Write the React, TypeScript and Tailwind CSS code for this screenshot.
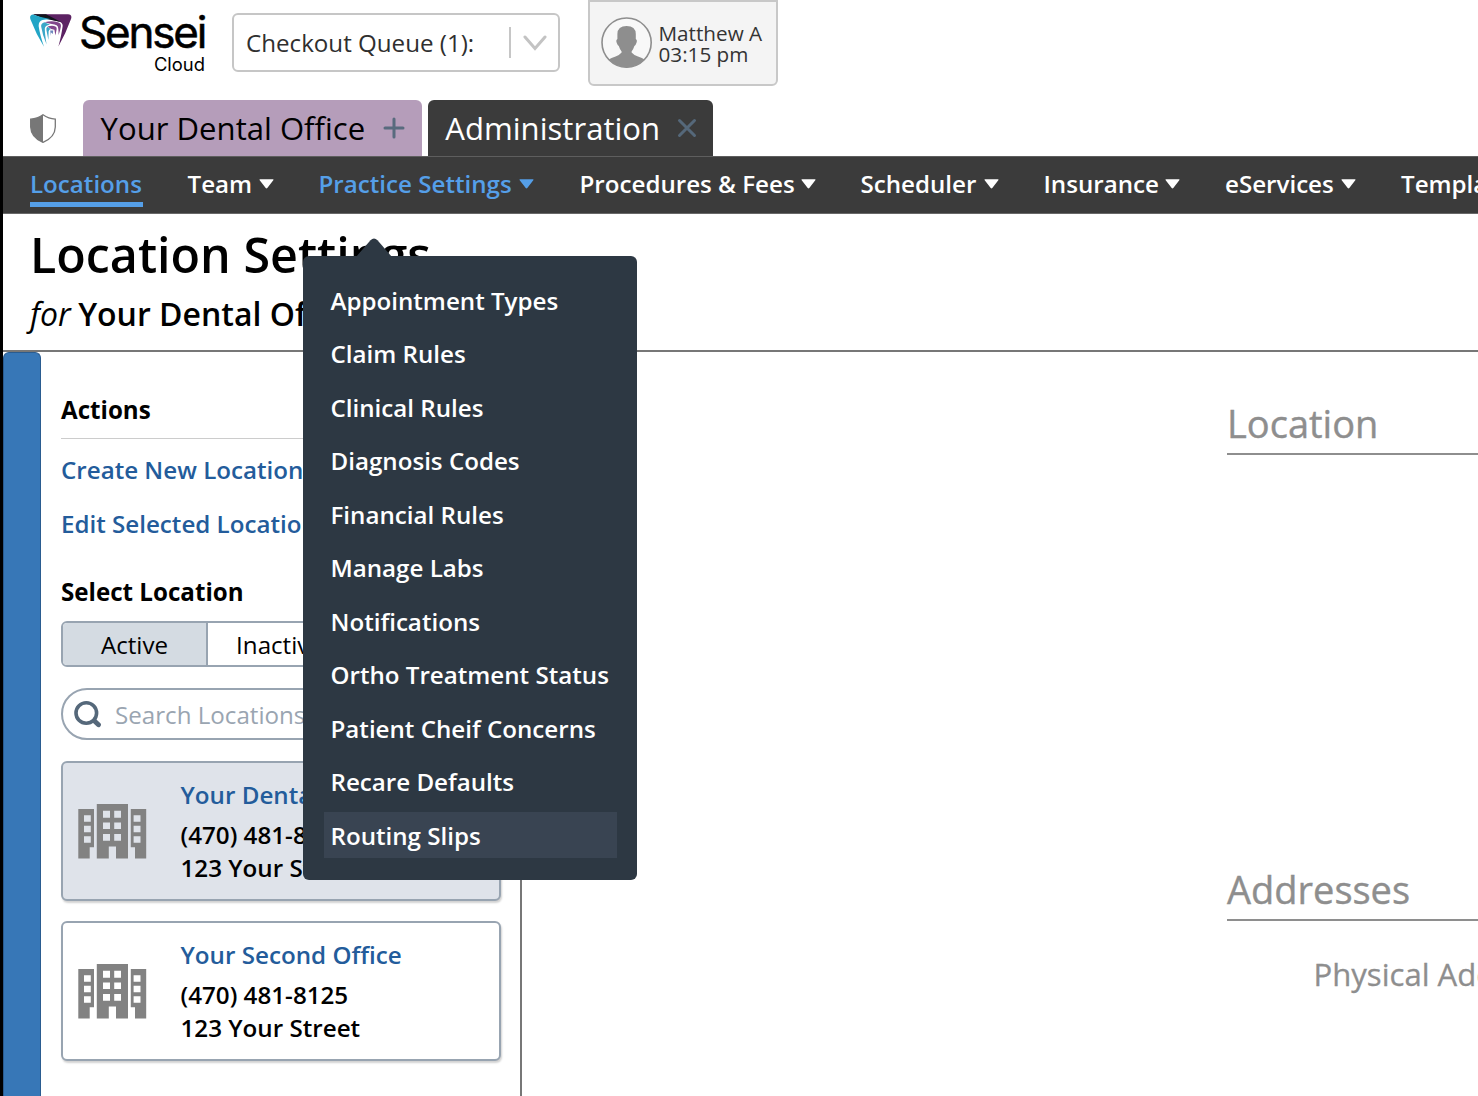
const navItems = [
  { label: "Team", width: "w-[131px]", caret: "ml-[7px]" },
  { label: "Practice Settings", width: "w-[261px]", caret: "ml-[7.5px]", active: true },
  { label: "Procedures & Fees", width: "w-[281px]", caret: "ml-[6.5px]" },
  { label: "Scheduler", width: "w-[183px]", caret: "ml-[7.5px]" },
  { label: "Insurance", width: "w-[181.5px]", caret: "ml-[6.5px]" },
  { label: "eServices", width: "w-[176px]", caret: "ml-[7.5px]" },
  { label: "Templates", width: "w-[190px]", caret: "ml-[7.5px]" },
];

const menuItems = [
  "Appointment Types",
  "Claim Rules",
  "Clinical Rules",
  "Diagnosis Codes",
  "Financial Rules",
  "Manage Labs",
  "Notifications",
  "Ortho Treatment Status",
  "Patient Cheif Concerns",
  "Recare Defaults",
  "Routing Slips",
];

function SenseiMark() {
  return (
    <svg className="h-[34px] w-[42px] shrink-0" viewBox="0 0 42 34">
      <path d="M3 0.3 H38 Q42.5 0.6 41 5 Q36 19 28.4 32.5 Q31.5 21 32.6 12.5 Q33.2 8.4 28.5 7.4 L16 4.5Z" fill="#5c2263" />
      <path d="M3 0.3 H16 L31 8 L12 4Z" fill="#12141c" />
      <path d="M3 0.5 Q-1 1 0.5 5.5 Q6 20 14 32.8 Q10 21 8.8 13 Q8 7.5 12.5 6 Q16 5 21 5.2 Q11 3.6 3 0.5Z" fill="#22a5c6" />
      <path d="M14.5 8.2 Q22 6.2 28 8.2 Q31.4 9.2 30.9 12.5 Q30.4 16 28.6 21 Q28.6 15 27.8 12.6 Q27 11 24.5 10.6 Q19 9.6 14.5 8.2Z" fill="#82468c" />
      <path d="M14.5 8.2 Q10.6 9.2 11.2 12.8 Q12.4 21 16.6 30.5 Q14.8 20 14.8 14.5 Q14.9 11.4 20 10.4 Q17 9.6 14.5 8.2Z" fill="#3aa7c8" />
      <path d="M17.5 12.6 Q22 11 25.4 12.4 Q27 13 26.7 15 L25.4 21.5 L24.4 15.8 Q20 15 17.5 12.6Z" fill="#82468c" />
      <path d="M17.5 12.8 Q16 13.6 16.4 16 L18.4 26 L18.6 17.4 Q18.8 15.4 21 15 Q19 14.2 17.5 12.8Z" fill="#3aa7c8" />
      <path d="M20.2 16.6 H23.2 L22.8 20 L21 18.6 L20.8 22Z" fill="#6a86bd" />
    </svg>
  );
}

function Buildings() {
  return (
    <svg className="h-[55px] w-[69px] shrink-0" viewBox="0 0 69 55" fill="#828282" fillRule="evenodd">
      <path d="M0.3 5H16V43.2H11.7V54.5H0.3Z M6 11.2V17.8H12.8V11.2Z M6 21.8V28.2H12.8V21.8Z M6 32.2V38.8H12.8V32.2Z" />
      <path d="M18.8 0H50V54.5H38V42.6H30.8V54.5H18.8Z M25 6.8V13.7H32V6.8Z M36.2 6.8V13.7H43V6.8Z M25 18.5V25H32V18.5Z M36.2 18.5V25H43V18.5Z M25 30V36.7H32V30Z M36.2 30V36.7H43V30Z" />
      <path d="M52.8 5H68.2V54.5H57V43.2H52.8Z M55.6 11.2V17.8H62.5V11.2Z M55.6 21.8V28.2H62.5V21.8Z M55.6 32.2V38.8H62.5V32.2Z" />
    </svg>
  );
}

function OfficeCard({ name, selected }: { name: string; selected?: boolean }) {
  return (
    <div
      className={
        "flex h-[140px] w-[440px] items-center rounded-[6px] border-2 border-[#98a4b1] pl-[15px] shadow-[1px_2px_2px_rgba(0,0,0,0.18)] " +
        (selected ? "bg-[#dfe3ea]" : "bg-white")
      }
    >
      <Buildings />
      <div className="ml-[33.5px] text-[24.2px] font-semibold leading-[33px] text-black">
        <div className="mb-[7px] whitespace-nowrap text-[#235c9b]">{name}</div>
        <div>(470) 481-8125</div>
        <div>123 Your Street</div>
      </div>
    </div>
  );
}

export default function App() {
  return (
    <div className="relative flex h-[1096px] w-[1478px] flex-col overflow-hidden border-l-[3px] border-black bg-white font-['Open_Sans',sans-serif] text-[24.15px] text-black">
      <header className="flex h-[100px] shrink-0 items-start">
        <div className="ml-[27px] mt-[14px] flex w-[175px]">
          <SenseiMark />
          <div className="ml-[7px] flex w-[126px] flex-col items-end font-['Inter',sans-serif]">
            <span className="h-[36px] self-start text-[44px] font-normal leading-[36px] tracking-[-2.2px] [-webkit-text-stroke:0.5px_black]">Sensei</span>
            <span className="mt-[4px] h-[20px] text-[18.4px] leading-[21px]">Cloud</span>
          </div>
        </div>
        <div className="ml-[27px] mt-[13px] flex h-[59px] w-[328px] items-center rounded-[6px] border-2 border-[#c6c6c6] pl-[12px] text-[#2f2f2f]">
          <span className="mt-[2px] whitespace-nowrap">Checkout Queue (1):</span>
          <span className="ml-auto h-[31px] w-[2px] bg-[#c6c6c6]" />
          <svg className="ml-[12px] mr-[11px] h-[18px] w-[24px]" viewBox="0 0 24 18" fill="none" stroke="#c3c3c3" strokeWidth="3" strokeLinecap="round">
            <path d="M2 3L12 14.5L22 3" />
          </svg>
        </div>
        <div className="ml-[28px] flex h-[86px] w-[190px] items-center rounded-b-[6px] border-2 border-[#c8c8c8] bg-[#f4f4f4] pl-[11px] text-[#333]">
          <svg className="h-[52px] w-[52px]" viewBox="0 0 52 52">
            <circle cx="25.6" cy="25.6" r="24.6" fill="#f8f8f8" stroke="#8e8e8e" strokeWidth="1.6" />
            <path d="M25.6 9 Q34.6 9 34.8 17 V22 Q36.6 23 35.4 26 Q34.6 28.5 33.4 29 Q32.1 33 30.6 34.5 V35.5 Q32.6 38 37 39.5 Q41.5 41 43.5 42.6 Q36 50.4 25.6 50.4 Q15.6 50.4 7.7 42.6 Q10 41 14.6 39.5 Q18.6 38 20.6 35.5 V34.5 Q19.1 33 17.8 29 Q16.6 28.5 15.8 26 Q14.6 23 16.4 22 V17 Q16.6 9 25.6 9Z" fill="#8e8e8e" />
          </svg>
          <div className="ml-[5.5px] mt-px text-[20.7px] leading-[21px]">
            <div>Matthew A</div>
            <div>03:15 pm</div>
          </div>
        </div>
      </header>

      <div className="flex h-[56px] shrink-0 items-end">
        <svg className="mb-[13.5px] ml-[27px] h-[29px] w-[26px]" viewBox="0 0 26 29">
          <path d="M13 0.8 Q18.5 4.8 25.3 5.2 V13 Q25 23.5 13 28.3 Q1 23.5 0.7 13 V5.2 Q7.5 4.8 13 0.8Z" fill="white" stroke="#777" strokeWidth="1.3" />
          <path d="M13 0.8 V28.3 Q1 23.5 0.7 13 V5.2 Q7.5 4.8 13 0.8Z" fill="#777" />
        </svg>
        <div className="ml-[27px] flex h-full w-[338.5px] items-center rounded-t-[6px] bg-[#b59dba] pl-[17.6px] text-[31.1px]">
          <span className="whitespace-nowrap">Your Dental Office</span>
          <svg className="ml-auto mr-[16.5px] h-[22px] w-[22px]" viewBox="0 0 22 22" stroke="#586b7e" strokeWidth="3" strokeLinecap="round">
            <path d="M11 2V20M2 11H20" />
          </svg>
        </div>
        <div className="ml-[6.5px] flex h-full w-[285px] items-center rounded-t-[6px] bg-[#3b3b3b] pl-[17.3px] text-[31.1px] text-white">
          <span>Administration</span>
          <svg className="ml-auto mr-[16px] h-[20px] w-[20px]" viewBox="0 0 20 20" stroke="#55687a" strokeWidth="3" strokeLinecap="round">
            <path d="M2.5 2.5L17.5 17.5M17.5 2.5L2.5 17.5" />
          </svg>
        </div>
      </div>

      <nav className="flex h-[58px] w-[1475px] shrink-0 items-start overflow-hidden border-b border-t border-b-[#686868] border-t-[#5e5e5e] bg-[#3b3b3b] pl-[27px] font-semibold text-white">
        <div className="mr-[45px] h-[50px] w-[112.5px] shrink-0 border-b-[5px] border-[#559fe8] text-[#559fe8]">
          <span className="block leading-[53px]">Locations</span>
        </div>
        {navItems.map((n) => (
          <div key={n.label} className={"flex shrink-0 items-center " + n.width + (n.active ? " text-[#559fe8]" : "")}>
            <span className="whitespace-nowrap leading-[53px]">{n.label}</span>
            <svg className={"h-[10px] w-[15px] shrink-0 " + n.caret} viewBox="0 0 15 10" fill="currentColor">
              <path d="M0.8 0.3H14.2Q14.8 0.6 14.3 1.2L8.3 9Q7.5 9.8 6.7 9L0.7 1.2Q0.2 0.6 0.8 0.3Z" />
            </svg>
          </div>
        ))}
      </nav>

      <div className="h-[138px] shrink-0 border-b-2 border-[#777]">
        <h1 className="ml-[27px] mt-[7px] w-fit text-[48.4px] font-semibold leading-[66px]">Location Settings</h1>
        <p className="ml-[27px] mt-[4px] whitespace-nowrap text-[32px] leading-[45px]">
          <i>for</i>
          <span className="ml-[7.5px] font-semibold">Your Dental Office</span>
        </p>
      </div>

      <div className="flex min-h-0 flex-1">
        <div className="w-[37.5px] shrink-0 rounded-t-[6px] border border-b-0 border-[#2a5c90] bg-[#3777b7]" />
        <aside className="w-[481.5px] shrink-0 border-r-2 border-[#777] pl-[20.5px]">
          <h2 className="mt-[41px] w-fit font-bold leading-[34px]">Actions</h2>
          <div className="mt-[11px] h-px w-[440px] bg-[#ccc]" />
          <div className="mt-[14px] w-fit font-semibold leading-[34px] text-[#235c9b]">Create New Location</div>
          <div className="mt-[20px] w-fit font-semibold leading-[34px] text-[#235c9b]">Edit Selected Location</div>
          <h2 className="mt-[34px] w-fit font-bold leading-[34px]">Select Location</h2>
          <div className="mt-[12px] flex h-[46px] w-[440px] overflow-hidden rounded-[6px] border-2 border-[#98a4b1]">
            <div className="flex w-[145px] items-center justify-center border-r-2 border-[#98a4b1] bg-[#d4dbe2] pt-[3px]">Active</div>
            <div className="flex w-[143px] items-center justify-center pt-[3px]">Inactive</div>
          </div>
          <div className="mt-[21px] flex h-[52px] w-[440px] items-center rounded-full border-2 border-[#98a4b1] pl-[11px] text-[#9aa5b1]">
            <svg className="h-[28px] w-[28px]" viewBox="0 0 28 28" fill="none" stroke="#55687a" strokeWidth="3.6" strokeLinecap="round">
              <circle cx="12.3" cy="13" r="10.3" />
              <path d="M20.5 21L24.5 24.8" strokeWidth="4.8" />
            </svg>
            <span className="ml-[13px] mt-[3px]">Search Locations</span>
          </div>
          <div className="mt-[21px] flex flex-col gap-[20px]">
            <OfficeCard name="Your Dental Office" selected />
            <OfficeCard name="Your Second Office" />
          </div>
        </aside>
        <main className="min-w-0 flex-1 overflow-hidden pl-[705px] text-[#8e8e8e]">
          <h2 className="h-[103px] whitespace-nowrap border-b-2 border-[#8e8e8e] pt-[44px] text-[38px] leading-[54px] [-webkit-text-stroke:0.4px_#8e8e8e]">Location</h2>
          <h2 className="mt-[400px] h-[66px] whitespace-nowrap border-b-2 border-[#8e8e8e] text-[38px] leading-[69px] [-webkit-text-stroke:0.4px_#8e8e8e]">Addresses</h2>
          <p className="ml-[86.5px] mt-[30px] whitespace-nowrap text-[31.1px] leading-[46px] [-webkit-text-stroke:0.3px_#8e8e8e]">Physical Address</p>
        </main>
      </div>

      <div className="absolute left-[300px] top-[256px] h-[624px] w-[334px] rounded-[6px] bg-[#2d3843] pl-[21px] pt-[21px] font-semibold text-white">
        <svg className="absolute left-[51px] top-[-18px] h-[19px] w-[40px]" viewBox="0 0 40 19" fill="#2d3843">
          <path d="M2 19L16.5 2.2Q20 -1.4 23.5 2.2L38 19Z" />
        </svg>
        <ul className="flex flex-col gap-[7.5px]">
          {menuItems.map((m) => (
            <li key={m} className={"flex h-[46px] w-[293px] items-center whitespace-nowrap pl-[6.5px] pt-[2px] " + (m === "Routing Slips" ? "bg-[#394452]" : "")}>
              {m}
            </li>
          ))}
        </ul>
      </div>
    </div>
  );
}
